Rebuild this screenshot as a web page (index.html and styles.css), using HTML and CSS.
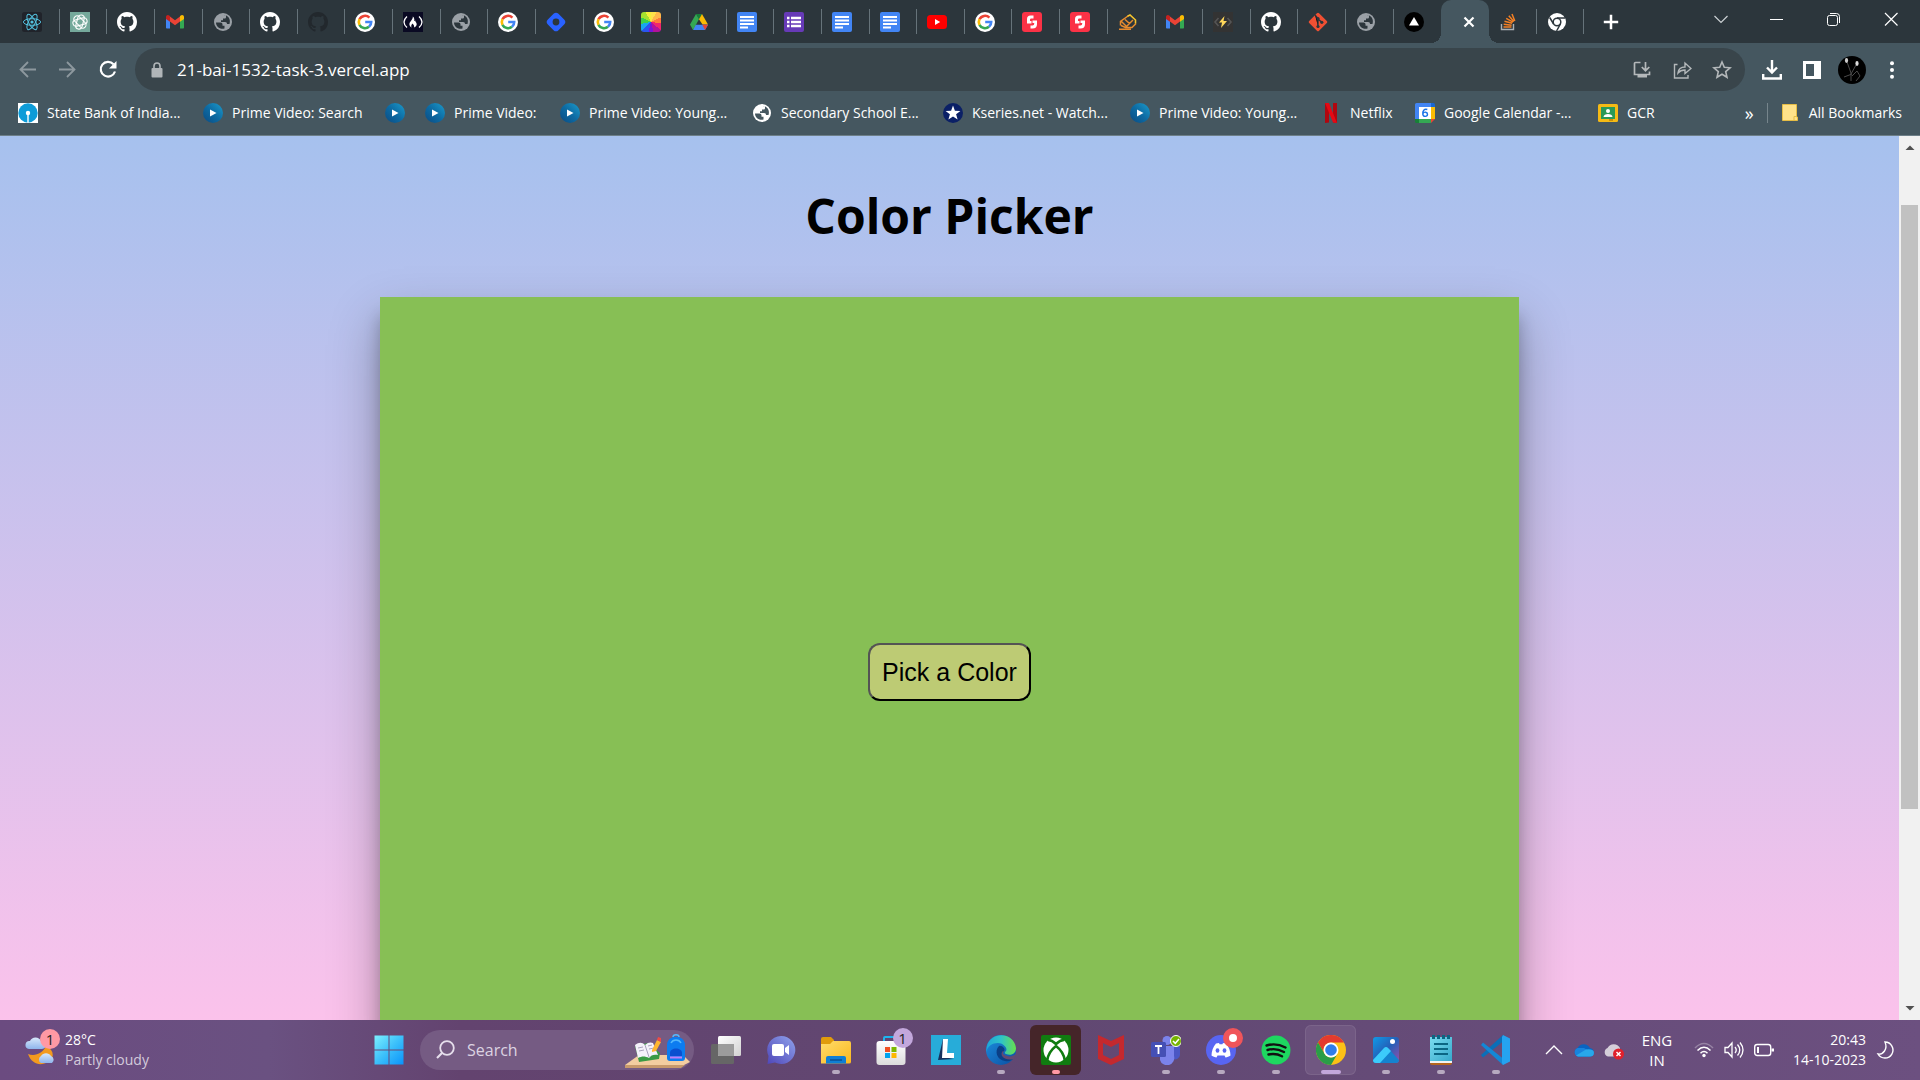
FILE: index.html
```html
<!DOCTYPE html>
<html lang="en">
<head>
<meta charset="utf-8">
<title>Color Picker</title>
<link rel="stylesheet" href="styles.css">
</head>
<body>
<svg class="defs" aria-hidden="true">
  <defs>
    <linearGradient id="g-prime" x1="1" y1="0" x2="0" y2="1"><stop offset="0" stop-color="#1c9ccc"/><stop offset=".5" stop-color="#0d6ba3"/><stop offset="1" stop-color="#0a4a82"/></linearGradient>
    <linearGradient id="g-win" x1="0" y1="0" x2="1" y2="1"><stop offset="0" stop-color="#7df0ff"/><stop offset=".5" stop-color="#3cc0fa"/><stop offset="1" stop-color="#0a93fb"/></linearGradient>
    <linearGradient id="g-chat" x1="1" y1="0" x2="0" y2="1"><stop offset="0" stop-color="#8fa2ec"/><stop offset="1" stop-color="#4f46b8"/></linearGradient>
    <linearGradient id="g-folder" x1="0" y1="0" x2="1" y2="1"><stop offset="0" stop-color="#ffdc6b"/><stop offset="1" stop-color="#fab81e"/></linearGradient>
    <linearGradient id="g-store" x1="0" y1="0" x2="0" y2="1"><stop offset="0" stop-color="#fff"/><stop offset="1" stop-color="#dcdcdc"/></linearGradient>
    <linearGradient id="g-edge1" x1="0" y1="0" x2="1" y2="0"><stop offset="0" stop-color="#1fa5d8"/><stop offset=".5" stop-color="#2fc3c8"/><stop offset="1" stop-color="#68e04c"/></linearGradient>
    <linearGradient id="g-edge2" x1="0" y1="0" x2="1" y2="1"><stop offset="0" stop-color="#1c8fe0"/><stop offset="1" stop-color="#0c4ea0"/></linearGradient>
    <linearGradient id="g-photo" x1="0" y1="0" x2="1" y2="1"><stop offset="0" stop-color="#0f9be8"/><stop offset=".5" stop-color="#2460b8"/><stop offset="1" stop-color="#9a4ea8"/></linearGradient>
    <linearGradient id="g-pad" x1="0" y1="0" x2="1" y2="1"><stop offset="0" stop-color="#7bdcf0"/><stop offset="1" stop-color="#36a9cb"/></linearGradient>
    <linearGradient id="g-cloud" x1="0" y1="0" x2="0" y2="1"><stop offset="0" stop-color="#d8e9fb"/><stop offset="1" stop-color="#8fb5ec"/></linearGradient>
    <linearGradient id="g-task" x1="0" y1="0" x2="1" y2="1"><stop offset="0" stop-color="#fff"/><stop offset="1" stop-color="#d2d2d2"/></linearGradient>
    <symbol id="react" viewBox="0 0 20 20"><rect width="20" height="20" rx="2.500" fill="#20232a"/><g fill="none" stroke="#53c1de" stroke-width="1"><ellipse cx="10" cy="10" rx="8.600" ry="3.300"/><ellipse cx="10" cy="10" rx="8.600" ry="3.300" transform="rotate(60 10 10)"/><ellipse cx="10" cy="10" rx="8.600" ry="3.300" transform="rotate(120 10 10)"/></g><circle cx="10" cy="10" r="1.600" fill="#53c1de"/></symbol>
    <symbol id="openai" viewBox="0 0 20 20"><rect width="20" height="20" fill="#75a99b"/><g fill="none" stroke="#fff" stroke-width="1.100"><rect x="6.800" y="2.800" width="6.400" height="14.400" rx="3.200" transform="rotate(15 10 10)"/><rect x="6.800" y="2.800" width="6.400" height="14.400" rx="3.200" transform="rotate(75 10 10)"/><rect x="6.800" y="2.800" width="6.400" height="14.400" rx="3.200" transform="rotate(135 10 10)"/></g></symbol>
    <symbol id="github" viewBox="0 0 16 16"><path fill="currentColor" d="M8 0C3.580 0 0 3.580 0 8c0 3.540 2.290 6.530 5.470 7.590.4.070.55-.17.55-.38 0-.19-.01-.82-.01-1.490-2.010.37-2.530-.49-2.690-.94-.09-.23-.48-.94-.82-1.130-.28-.15-.68-.52-.01-.53.63-.01 1.080.58 1.230.82.72 1.210 1.870.87 2.330.66.07-.52.28-.87.51-1.070-1.780-.2-3.640-.89-3.640-3.950 0-.87.31-1.590.82-2.150-.08-.2-.36-1.020.08-2.120 0 0 .67-.21 2.200.82.64-.18 1.320-.27 2-.27s1.360.09 2 .27c1.530-1.040 2.200-.82 2.200-.82.44 1.100.16 1.920.08 2.120.51.56.82 1.270.82 2.150 0 3.070-1.870 3.750-3.650 3.950.29.25.54.73.54 1.480 0 1.070-.01 1.930-.01 2.200 0 .21.15.46.55.38A8.010 8.010 0 0 0 16 8c0-4.420-3.580-8-8-8z"/></symbol>
    <symbol id="gmail" viewBox="0 0 20 20"><path fill="#4285f4" d="M1 5v10.500c0 .6.500 1 1 1h3V8z"/><path fill="#34a853" d="M19 5v10.500c0 .6-.5 1-1 1h-3V8z"/><path fill="#ea4335" d="M5 4.500l5 3.800 5-3.800v5L10 13.300 5 9.500z"/><path fill="#c5221f" d="M1 7V5c0-2 2-2.700 3.300-1.500L5 4.200v5.500z"/><path fill="#fbbc04" d="M19 7V5c0-2-2-2.700-3.300-1.500l-.7.700v5.500z"/></symbol>
    <symbol id="globe" viewBox="0 0 20 20"><circle cx="10" cy="10" r="9" fill="currentColor"/><path d="M3 10.500h4.500c1.300 0 2 .8 2 2v1.300h2v2.700c-4.500 1.300-8.500-2-8.500-6zM9 3.300c1.500-.4 3-.2 4 .2v1.800c0 .8-.6 1.200-1.500 1.200H10v1.800H8V10h4c1.500 0 2 .8 2 2h2.500c.8-2.500.4-5-1-6.700C13.500 2.900 11 2.600 9 3.300z" fill="var(--land,#2c363c)"/></symbol>
    <symbol id="google" viewBox="0 0 20 20"><circle cx="10" cy="10" r="10" fill="#fff"/><g fill="none" stroke-width="2.600"><path stroke="#ea4335" d="M4.500 7.300A6.200 6.200 0 0 1 14.400 5.600"/><path stroke="#fbbc05" d="M4.500 12.800a6.200 6.200 0 0 1 0-5.600"/><path stroke="#34a853" d="M14 14.800a6.200 6.200 0 0 1-9.500-2"/><path stroke="#4285f4" d="M10.200 10h6a6.200 6.200 0 0 1-2.200 4.800"/></g></symbol>
    <symbol id="fcc" viewBox="0 0 20 20"><rect width="20" height="20" fill="#0a0a23"/><path d="M4 4.500c-4 3.500-4 7.500 0 11M16 4.500c4 3.500 4 7.500 0 11" fill="none" stroke="#fff" stroke-width="1.300"/><path d="M9.800 4.500c.5 3-3.400 5-3.400 7.800 0 1.600 1 2.800 2.300 3.200-1-1.500-.2-3 1-4 .3 1 2.200 2 1.200 4 1.600-.4 2.800-1.600 2.800-3.200 0-2-1.500-2.400-1.600-4.100-.2.700-.5.900-.9.900.5-1.800-.1-3.800-1.400-4.600z" fill="#fff"/></symbol>
    <symbol id="hash" viewBox="0 0 20 20"><rect x="2.500" y="2.500" width="15" height="15" rx="3.500" transform="rotate(45 10 10)" fill="#2962ff"/><circle cx="10" cy="10" r="3.400" fill="#2c363c"/></symbol>
    <symbol id="drive" viewBox="0 0 20 20"><path fill="#188038" d="M7 2h6l-3 5.300z"/><path fill="#fbbc04" d="M10 7.300L13 2l6 10.500h-5.500z"/><path fill="#4285f4" d="M6 12.700h13L16 18H4z"/><path fill="#ea4335" d="M13.300 12.700H19L16 18z"/><path fill="#34a853" d="M7 2l3 5.300L4 18l-3-5.500z"/></symbol>
    <symbol id="docs" viewBox="0 0 20 20"><rect width="20" height="20" rx="2" fill="#4285f4"/><path stroke="#fff" stroke-width="2" d="M3 5h14M3 8.500h14M3 12h14M3 15.500h8"/></symbol>
    <symbol id="forms" viewBox="0 0 20 20"><rect width="20" height="20" rx="2" fill="#673ab7"/><path stroke="#fff" stroke-width="2.500" d="M3 6h2.500M7 6h10M3 10h2.500M7 10h10M3 14h2.500M7 14h10"/></symbol>
    <symbol id="youtube" viewBox="0 0 20 20"><rect y="3" width="20" height="14" rx="3.500" fill="red"/><path fill="#fff" d="M8 7l5.200 3L8 13z"/></symbol>
    <symbol id="shot" viewBox="0 0 20 20"><rect width="20" height="20" rx="3" fill="#fb3246"/><path fill="#fff" d="M11.500 3.500v3H9.200Q8 6.500 8 7.700V9h1.500v2.500H5V7q0-3.500 3.500-3.500zM15 8.500V12q0 4.500-4.500 4.500h-2v-3h2q1.700 0 1.700-1.700V11h-1.700V8.500z"/></symbol>
    <symbol id="pencil" viewBox="0 0 20 20"><path d="M2.500 13.500v-4L10 4M3 13.500l4.500 2h6.500L18 11.500M3.500 9.500l5 5L15 8M7 7.500l4.500 4M1 17.200h12" fill="none" stroke="#e78b2e" stroke-width="1.500"/><path d="M9.500 4.200L12 3l5.500 5v3.500" fill="none" stroke="#f7c52d" stroke-width="1.600"/></symbol>
    <symbol id="bolt" viewBox="0 0 20 20"><rect width="20" height="20" fill="#333"/><path d="M5.500 6L2 10l3.500 4M14.500 6l3.500 4-3.500 4" fill="none" stroke="#555" stroke-width="1.600"/><path d="M11.500 4L6 10.500h3L8 16l6-7h-3.500z" fill="#ffd75a"/></symbol>
    <symbol id="git" viewBox="0 0 20 20"><rect x="3" y="3" width="14" height="14" rx="1.500" transform="rotate(45 10 10)" fill="#f05033"/><path d="M7 3l3 3.500v8M10 7l3.500 3" stroke="#2c363c" stroke-width="1.400"/><g fill="#2c363c"><circle cx="10" cy="6.600" r="1.600"/><circle cx="10" cy="14.500" r="1.600"/><circle cx="13.800" cy="10.300" r="1.600"/></g></symbol>
    <symbol id="vercel" viewBox="0 0 20 20"><circle cx="10" cy="10" r="10"/><path fill="#fff" d="M10 5l5 8.500H5z"/></symbol>
    <symbol id="stack" viewBox="0 0 20 20"><path d="M2.500 12v5.500h12V12" fill="none" stroke="#aab0b4" stroke-width="1.400"/><path d="M4.500 15h8M4.700 12.300l7.900.9M5.500 9.300l7.600 2M7.200 6.300l6.800 3.800M9.800 3.700l5.100 5.800M13 2l2.800 7" stroke="#f48024" stroke-width="1.500"/></symbol>
    <symbol id="chromew" viewBox="0 0 20 20"><circle cx="10" cy="10" r="9" fill="#fff"/><circle cx="10" cy="10" r="3.800" fill="none" stroke="#2c363c" stroke-width="1.500"/><path d="M10 6h8M6.600 12L2.700 5.500M13.400 12L9.600 19" stroke="#2c363c" stroke-width="1.500"/></symbol>
    <symbol id="prime" viewBox="0 0 20 20"><circle cx="10" cy="10" r="10" fill="url(#g-prime)"/><path fill="#fff" d="M7 6.500l6.500 3.500L7 13.500z"/></symbol>
    <symbol id="sbi" viewBox="0 0 20 20"><rect width="20" height="20" fill="#fff"/><circle cx="10" cy="10" r="9.700" fill="#0d9cd8"/><circle cx="10" cy="10" r="2.200" fill="#fff"/><path stroke="#fff" stroke-width="1.400" d="M10 10v10"/></symbol>
    <symbol id="star" viewBox="0 0 20 20"><circle cx="10" cy="10" r="10" fill="#0b2066"/><path fill="#fff" d="M10 2.500l1.900 5.200 5.500.2-4.300 3.400 1.500 5.300-4.600-3-4.600 3 1.500-5.300-4.300-3.400 5.500-.2z"/></symbol>
    <symbol id="netflix" viewBox="0 0 20 20"><path fill="#b1060f" d="M4 0h4v19.500l-4 .5zM12 0h4v20l-4-.5z"/><path fill="#e50914" d="M4 0h4l8 20-4-.5z"/></symbol>
    <symbol id="cal" viewBox="0 0 20 20"><path fill="#4285f4" d="M0 1.500Q0 0 1.500 0H16v4H4v12H0z"/><path fill="#1967d2" d="M16 0h2.500Q20 0 20 1.500V4h-4z"/><path fill="#fbbc04" d="M16 4h4v12h-4z"/><path fill="#34a853" d="M4 16h12v4H4z"/><path fill="#188038" d="M0 16h4v4H1.500Q0 20 0 18.500z"/><path fill="#ea4335" d="M16 16h4l-4 4z"/><path fill="#fff" d="M4 4h12v12H4z"/><path d="M12.300 6.500c-3-1-5 1.300-4.500 4.600.4 3.200 4.700 2.800 4.700.2 0-2.500-3.600-2.900-4.600-.6" fill="none" stroke="#1a73e8" stroke-width="1.400"/></symbol>
    <symbol id="gcr" viewBox="0 0 20 20"><rect y="1" width="20" height="18" rx="1.500" fill="#f5ba15"/><rect x="3" y="4" width="14" height="12" fill="#2a9a57"/><circle cx="10" cy="8" r="2" fill="#fff"/><path fill="#fff" d="M5.500 14c0-4 9-4 9 0z"/><path fill="#c98f0a" d="M11 16h4v2h-4z"/></symbol>
    <symbol id="folder" viewBox="0 0 20 20"><path fill="#ffe28a" stroke="#e6bd45" d="M2.500 1.500h14V14h1v3.500h-15z"/><path d="M14 17.500v-4h3" fill="none" stroke="#e6bd45"/></symbol>
  </defs>
</svg>

<header class="browser">
  <div class="strip">
    <nav class="tabs" aria-label="Tabs">
      <a class="tab" href="#"><svg><use href="#react"/></svg></a>
      <a class="tab" href="#"><svg><use href="#openai"/></svg></a>
      <a class="tab" href="#"><svg><use href="#github"/></svg></a>
      <a class="tab" href="#"><svg><use href="#gmail"/></svg></a>
      <a class="tab dim" href="#"><svg><use href="#globe"/></svg></a>
      <a class="tab" href="#"><svg><use href="#github"/></svg></a>
      <a class="tab dark" href="#"><svg><use href="#github"/></svg></a>
      <a class="tab" href="#"><svg><use href="#google"/></svg></a>
      <a class="tab" href="#"><svg><use href="#fcc"/></svg></a>
      <a class="tab dim" href="#"><svg><use href="#globe"/></svg></a>
      <a class="tab" href="#"><svg><use href="#google"/></svg></a>
      <a class="tab" href="#"><svg><use href="#hash"/></svg></a>
      <a class="tab" href="#"><svg><use href="#google"/></svg></a>
      <a class="tab" href="#"><i class="wheel"></i></a>
      <a class="tab" href="#"><svg><use href="#drive"/></svg></a>
      <a class="tab" href="#"><svg><use href="#docs"/></svg></a>
      <a class="tab" href="#"><svg><use href="#forms"/></svg></a>
      <a class="tab" href="#"><svg><use href="#docs"/></svg></a>
      <a class="tab" href="#"><svg><use href="#docs"/></svg></a>
      <a class="tab" href="#"><svg><use href="#youtube"/></svg></a>
      <a class="tab" href="#"><svg><use href="#google"/></svg></a>
      <a class="tab" href="#"><svg><use href="#shot"/></svg></a>
      <a class="tab" href="#"><svg><use href="#shot"/></svg></a>
      <a class="tab" href="#"><svg><use href="#pencil"/></svg></a>
      <a class="tab" href="#"><svg><use href="#gmail"/></svg></a>
      <a class="tab" href="#"><svg><use href="#bolt"/></svg></a>
      <a class="tab" href="#"><svg><use href="#github"/></svg></a>
      <a class="tab" href="#"><svg><use href="#git"/></svg></a>
      <a class="tab dim" href="#"><svg><use href="#globe"/></svg></a>
      <a class="tab last" href="#"><svg><use href="#vercel"/></svg></a>
      <div class="tab active"><button class="close" aria-label="Close tab"><svg viewBox="0 0 20 20"><path d="M5.500 5.500l9 9M14.500 5.500l-9 9" stroke="#fff" stroke-width="2.200"/></svg></button></div>
      <a class="tab" href="#"><svg><use href="#stack"/></svg></a>
      <a class="tab" href="#"><svg><use href="#chromew"/></svg></a>
    </nav>
    <button class="newtab" aria-label="New tab"><svg viewBox="0 0 20 20"><path d="M10 2v16M2 10h16" stroke="#fff" stroke-width="2.800"/></svg></button>
    <div class="window">
      <button aria-label="Search tabs"><svg viewBox="0 0 20 20"><path d="M3.500 7l6.500 6.500L16.500 7" fill="none" stroke="#ccd1d4" stroke-width="1.200"/></svg></button>
      <button aria-label="Minimize"><svg viewBox="0 0 20 20"><path d="M2 10.500h13" stroke="#fff"/></svg></button>
      <button aria-label="Restore"><svg viewBox="0 0 20 20"><rect x="2.500" y="6.500" width="10" height="10" rx="2" fill="none" stroke="#fff"/><path d="M5 4.500h6.500a3 3 0 0 1 3 3V14" fill="none" stroke="#fff"/></svg></button>
      <button aria-label="Close"><svg viewBox="0 0 20 20"><path d="M3 4l12.500 12.500M15.500 4L3 16.500" stroke="#fff" stroke-width="1.200"/></svg></button>
    </div>
  </div>

  <div class="toolbar">
    <button class="tool faded" aria-label="Back"><svg viewBox="0 0 20 20"><path d="M18 9.500H3M10 2L2.500 9.500 10 17" fill="none" stroke="currentColor" stroke-width="1.800"/></svg></button>
    <button class="tool faded" aria-label="Forward"><svg viewBox="0 0 20 20"><path d="M1 9.500h15M9 2l7.500 7.500L9 17" fill="none" stroke="currentColor" stroke-width="1.800"/></svg></button>
    <button class="tool" aria-label="Reload"><svg viewBox="0 0 20 20"><path d="M15.500 4.300A7.300 7.300 0 1 0 17 11.500" fill="none" stroke="currentColor" stroke-width="2.200"/><path d="M18.500 1v7.500H11z" fill="currentColor"/></svg></button>
    <div class="omnibox">
      <svg class="lock" viewBox="0 0 20 20"><rect x="4.500" y="8" width="11" height="9.500" rx="1" fill="currentColor"/><path d="M7 8V6a3 3 0 0 1 6 0v2" fill="none" stroke="currentColor" stroke-width="1.600"/></svg>
      <input type="text" aria-label="Address" value="21-bai-1532-task-3.vercel.app">
      <button class="tool grey" aria-label="Install"><svg viewBox="0 0 20 20"><path d="M8.500 2.500h-5a1 1 0 0 0-1 1v11h15v-3M13.500 2v8M9.800 7l3.700 3.700L17.300 7" fill="none" stroke="currentColor" stroke-width="1.700"/><path d="M5.500 14h9.500v3.500H5.500z" fill="currentColor"/></svg></button>
      <button class="tool grey" aria-label="Share"><svg viewBox="0 0 20 20"><path d="M5.500 4.500h-3v13.500h13.500V15M6 13c.5-4.500 3-6 7-6V3l6 5.500-6 5v-3.500c-3 0-5 .6-7 3z" fill="none" stroke="currentColor" stroke-width="1.400"/></svg></button>
      <button class="tool grey" aria-label="Bookmark"><svg viewBox="0 0 20 20"><path d="M10 2l2.300 5.300 5.800.5-4.400 3.800 1.300 5.700-5-3-5 3 1.300-5.700-4.400-3.800 5.800-.5z" fill="none" stroke="currentColor" stroke-width="1.600"/></svg></button>
    </div>
    <button class="tool" aria-label="Downloads"><svg viewBox="0 0 20 20"><path d="M10 0v12M5 7.500l5 5 5-5M1.200 14v4.500h17.600V14" fill="none" stroke="#fff" stroke-width="2.400"/></svg></button>
    <button class="tool" aria-label="Side panel"><svg viewBox="0 0 20 20"><path d="M1 1h18v18H1zM4 4v12h8V4z" fill="#fff" fill-rule="evenodd"/></svg></button>
    <button class="tool avatar" aria-label="Profile"><svg viewBox="0 0 28 28"><circle cx="14" cy="14" r="14"/><path d="M9 6l4 11M18 9l-5 9M13 17v8M14 20l5-5 3 5-4 5M6 21l8-3" fill="none" stroke="#4a4a4a"/><ellipse cx="8.500" cy="4.500" rx="1.600" ry="2.400" fill="#ccc"/><ellipse cx="19" cy="7.500" rx="1.600" ry="2.400" fill="#ddd"/></svg></button>
    <button class="tool" aria-label="Menu"><svg viewBox="0 0 20 20"><g fill="#fff"><circle cx="10" cy="3.300" r="2"/><circle cx="10" cy="10" r="2"/><circle cx="10" cy="16.700" r="2"/></g></svg></button>
  </div>

  <div class="bookmarks">
    <nav class="marks" aria-label="Bookmarks">
      <a href="#"><svg><use href="#sbi"/></svg>State Bank of India...</a>
      <a href="#"><svg><use href="#prime"/></svg>Prime Video: Search</a>
      <a href="#" aria-label="Prime Video"><svg><use href="#prime"/></svg></a>
      <a href="#"><svg><use href="#prime"/></svg>Prime Video:</a>
      <a href="#"><svg><use href="#prime"/></svg>Prime Video: Young...</a>
      <a href="#" class="light"><svg><use href="#globe"/></svg>Secondary School E...</a>
      <a href="#"><svg><use href="#star"/></svg>Kseries.net - Watch...</a>
      <a href="#"><svg><use href="#prime"/></svg>Prime Video: Young...</a>
      <a href="#"><svg><use href="#netflix"/></svg>Netflix</a>
      <a href="#"><svg><use href="#cal"/></svg>Google Calendar -...</a>
      <a href="#"><svg><use href="#gcr"/></svg>GCR</a>
    </nav>
    <button class="more" aria-label="More bookmarks">»</button>
    <a class="all" href="#"><svg><use href="#folder"/></svg>All Bookmarks</a>
  </div>
</header>

<div class="viewport">
  <main class="page">
    <h1>Color Picker</h1>
    <section class="card"><button class="pick">Pick a Color</button></section>
  </main>
  <div class="scrollbar">
    <svg viewBox="0 0 20 20"><path d="M5.500 14L10 9.500l4.500 4.500z" fill="#505050"/></svg>
    <div class="track"><div class="thumb"></div></div>
    <svg viewBox="0 0 20 20"><path d="M5.500 6L10 10.500 14.500 6z" fill="#505050"/></svg>
  </div>
</div>

<footer class="taskbar">
  <a class="weather" href="#">
    <span class="badged"><svg class="sky" viewBox="0 0 32 32"><path d="M4 20c7 3 15-1 18-8 9 4 9 14 0 17-7 3-15 0-18-9z" fill="#f39a1e"/><path d="M5 15a4 4 0 0 1 1-8 6 6 0 0 1 11 0 4 4 0 0 1 1 8z" fill="url(#g-cloud)"/><path d="M17 29a4 4 0 0 1 0-7 6 6 0 0 1 10 0 4 4 0 0 1 1 7z" fill="url(#g-cloud)"/></svg><b class="badge pink">1</b></span>
    <span class="lines"><span>28°C</span><span class="soft">Partly cloudy</span></span>
  </a>
  <nav class="apps" aria-label="Taskbar">
    <button class="app" aria-label="Start"><svg viewBox="0 0 30 30"><path d="M.5.500h14v14H.5zM15.500.500h14v14h-14zM.5 15.500h14v14H.5zM15.500 15.500h14v14h-14z" fill="url(#g-win)"/></svg></button>
    <label class="search">
      <svg class="glass" viewBox="0 0 20 20"><circle cx="12" cy="8" r="6.800" fill="none" stroke="#e6dfec" stroke-width="1.800"/><path d="M7.500 12.500L2 18" stroke="#e6dfec" stroke-width="2.200"/></svg>
      <input type="text" placeholder="Search" aria-label="Search">
      <svg class="art" viewBox="0 0 66 40"><path d="M0 35L14 25h44l7 7-8 4z" fill="#f3cda0"/><path d="M0 35h60l-4 3H0z" fill="#c89a6c"/><path d="M10 16l13-3 12 10-1 6-20 3z" fill="#3a9a44"/><path d="M10 15c4-3 7-3 10 0 3-3 6-3 8-2l5 12c-4-1-7 0-9 3-4-2-7-2-11 0z" fill="#f4f1fa"/><path d="M20 15l4 12M13 18l5-1M14 21l5-1M23 16l4-1M24 19l5-1" stroke="#a9a3bd"/><path d="M27 20l5-10 4 2-5 9-4 1z" fill="#ffb62e"/><path d="M32 10l1-3 3 1v4z" fill="#f04c44"/><path d="M42 28V15c0-11 18-11 18 0v13q0 3-3 3H45q-3 0-3-3z" fill="#0c7cf0"/><path d="M45 23c0-6 12-6 12 0v3H45z" fill="#0a4fd0"/><path d="M45 27.500h12" stroke="#c07df8" stroke-width="2"/><path d="M48 7c0-3 6-3 6 0M46 13c2-4 8-4 10 0" fill="none" stroke="#55b8fb" stroke-width="1.500"/></svg>
    </label>
    <button class="app" aria-label="Task view"><svg viewBox="0 0 30 30"><rect y="9" width="23" height="20" rx="1.500" fill="#666"/><rect x="7" y="1" width="23" height="20" rx="1.500" fill="url(#g-task)"/><path d="M7 9h16v12H8.500Q7 21 7 19.500z" fill="#9c9c9c"/></svg></button>
    <button class="app" aria-label="Chat"><svg viewBox="0 0 30 30"><path d="M15 1a14 14 0 1 1-6 26.500L1.500 29l1-8A14 14 0 0 1 15 1z" fill="url(#g-chat)"/><rect x="6" y="9" width="12" height="12" rx="2" fill="#fff"/><path d="M19 13l4-3v10l-4-3z" fill="#fff"/></svg></button>
    <button class="app run" aria-label="Explorer"><svg viewBox="0 0 30 30"><path d="M0 4q0-2 2-2h8l3 3v4H0z" fill="#e09b0b"/><path d="M0 9h9l3-3h16q2 0 2 2v19q0 1.500-2 1.500H0z" fill="url(#g-folder)"/><path d="M5 28.500V23q0-2 2-2h16q2 0 2 2v5.500z" fill="#0f7fd4"/><path d="M9 25h12" stroke="#0a4f94" stroke-width="1.500"/></svg></button>
    <button class="app" aria-label="Store"><span class="badged"><svg viewBox="0 0 30 30"><path d="M8 8V3q0-1 1-1h11q1 0 1 1v5" fill="none" stroke="#1fb4ee" stroke-width="2"/><rect x=".5" y="6" width="29" height="24" rx="3" fill="url(#g-store)"/><path fill="#f05023" d="M9 12h5v5H9z"/><path fill="#7db900" d="M15.500 12h5v5h-5z"/><path fill="#00a3ee" d="M9 18h5v5H9z"/><path fill="#fdb800" d="M15.500 18h5v5h-5z"/></svg><b class="badge lilac">1</b></span></button>
    <button class="app" aria-label="Lenovo Vantage"><svg viewBox="0 0 30 30"><path fill="#27acd9" d="M0 0h30v30H0z"/><path fill="#16305c" d="M12 4L7 25l16-1-11-2z"/><path fill="#fff" d="M12 4h5l-1 14h7v5H11z"/></svg></button>
    <button class="app run" aria-label="Edge"><svg viewBox="0 0 30 30"><circle cx="15" cy="15" r="15" fill="url(#g-edge2)"/><path d="M1 11C5-4 28-3 30 13c0 6-5 8-10 6-2-1-1-2 0-3 2-3-3-8-8-8C6 8 2 11 0 17z" fill="url(#g-edge1)"/><path d="M13 11c-5 5-2 14 6 15 4 1 7-1 9-3-4 1-8 1-10-2-2-2-1-4 0-5 2-2-2-6-5-5z" fill="#0b3f86"/><path d="M18 16c-2 2-1 4 3 5 3 1 6 0 9-2l-2 5c-4 1-9 1-12-3-1-3 0-5 2-5z" fill="#634972"/></svg></button>
    <button class="app run xbox" aria-label="Xbox"><svg viewBox="0 0 30 30"><rect width="30" height="30" rx="2" fill="#107c10"/><circle cx="15" cy="15" r="12.500" fill="#fff"/><path d="M6 26c1-7 5-12 9-15 4 3 8 8 9 15M7 5c3 0 6 2 8 4 2-2 5-4 8-4" fill="none" stroke="#107c10" stroke-width="2.600"/></svg></button>
    <button class="app" aria-label="McAfee"><svg viewBox="0 0 30 30"><path d="M2 0l13 6L28 0v24l-13 6-13-6zM7 8v12l8 4 8-4V8l-8 4z" fill="#c4292e" fill-rule="evenodd"/></svg></button>
    <button class="app run" aria-label="Teams"><svg viewBox="0 0 30 30"><circle cx="16" cy="5.500" r="4.500" fill="#7b83eb"/><path d="M22 11h7v9a5 5 0 0 1-7 4z" fill="#4b57c4"/><path d="M9 11h14v10a7 7 0 0 1-14 4z" fill="#7b83eb"/><rect y="7" width="15" height="15" rx="1.500" fill="#4550b5"/><path d="M4 11h7M7.500 11v8" stroke="#fff" stroke-width="1.800"/><circle cx="25" cy="6" r="5.500" fill="#77b300" stroke="#fff"/><path d="M22 6l2.300 2.300L28 4" fill="none" stroke="#fff" stroke-width="1.500"/></svg></button>
    <button class="app run" aria-label="Discord"><span class="badged"><svg viewBox="0 0 30 30"><circle cx="15" cy="15" r="15" fill="#5865f2"/><path d="M10 8.500L13 8l.6 1.200h2.800L17 8l3 .5c3 3.500 4.500 8 4.500 12-1.500 1-3.500 1.800-5 2l-1-2h-7l-1 2c-1.500-.2-3.500-1-5-2 0-4 1.500-8.500 4.500-12z" fill="#fff"/><ellipse cx="11.500" cy="15.500" rx="1.900" ry="2.200" fill="#5865f2"/><ellipse cx="18.500" cy="15.500" rx="1.900" ry="2.200" fill="#5865f2"/></svg><b class="badge live"></b></span></button>
    <button class="app run" aria-label="Spotify"><svg viewBox="0 0 30 30"><circle cx="15" cy="15" r="14.500" fill="#1ed760"/><path d="M5.500 10.500c6-1.800 13-1.200 19 2M6.500 15c5-1.500 11-1 16.500 2M7.500 19.500c4.500-1 9-.7 13.500 1.800" fill="none" stroke="#111" stroke-width="2.400" stroke-linecap="round"/></svg></button>
    <button class="app run current" aria-label="Chrome"><svg viewBox="0 0 30 30"><circle cx="15" cy="15" r="15" fill="#fbc116"/><path d="M2 7.500A15 15 0 0 1 28 7.500H15a7.500 7.500 0 0 0-6.500 11.300z" fill="#e33b2e"/><path d="M2 7.500l6.500 11.300a7.500 7.500 0 0 0 13 0L15 30A15 15 0 0 1 2 7.500z" fill="#2a9d48"/><circle cx="15" cy="15" r="7.500" fill="#fff"/><circle cx="15" cy="15" r="5.800" fill="#2f7de9"/></svg></button>
    <button class="app run" aria-label="Photos"><svg viewBox="0 0 30 30"><rect x="2" y="2" width="26" height="26" rx="3" fill="url(#g-photo)"/><path d="M2 25l11-12q2-2 4 0l11 12q0 3-3 3H5q-3 0-3-3z" fill="#1483cf"/><path d="M2 25l11-12q2-2 4 0l3 3L9 28H5q-3 0-3-3z" fill="#3ccbfb"/><circle cx="21.500" cy="6.500" r="2.500" fill="#fff"/></svg></button>
    <button class="app run" aria-label="Notepad"><svg viewBox="0 0 30 30"><path d="M4 26h22v2q0 2-2 2H6q-2 0-2-2z" fill="#b5651d"/><path d="M4 2h22v24H4z" fill="url(#g-pad)"/><path d="M4 26h22v2H4z" fill="#f2f2f2"/><path d="M8 9h14M8 14h14M8 19h14" stroke="#0b6683" stroke-width="2"/><path d="M7.500 0v4M12.500 0v4M17.500 0v4M22.500 0v4" stroke="#0b6683" stroke-width="3"/></svg></button>
    <button class="app run" aria-label="VS Code"><svg viewBox="0 0 30 30"><path d="M0 20l2 2.500 20-16V0z" fill="#0a6fb8"/><path d="M0 10l2-2.500L22 23.500V30z" fill="#1388d6"/><path d="M22 0l7 3.500v23L22 30l-1-2V2z" fill="#25a3f0"/></svg></button>
  </nav>
  <div class="tray">
    <svg viewBox="0 0 20 20"><path d="M2 14l8-8 8 8" fill="none" stroke="#fff" stroke-width="1.400"/></svg>
    <svg viewBox="0 0 20 20"><path d="M4 16.500a4.500 4.500 0 0 1-.5-8.500 7 7 0 0 1 12.500 0 4.300 4.300 0 0 1 0 8.500z" fill="#0a63c0"/><path d="M4 16.500a4.500 4.500 0 0 1-.5-8.500l6.500 0 10 6q-1 2.500-4 2.500z" fill="#1883dc"/><path d="M2 15.500L12 9.500q8-1 8 3.500-.5 3.500-4 3.500H4z" fill="#28a8ea"/></svg>
    <svg viewBox="0 0 20 20"><path d="M4 16.500a4.500 4.500 0 0 1-.5-8.500 7 7 0 0 1 12.500 0v8.500z" fill="#d5ced9"/><circle cx="14.500" cy="14" r="5.500" fill="#e0202c"/><path d="M12.500 12l4 4M16.500 12l-4 4" stroke="#fff" stroke-width="1.500"/></svg>
    <button class="lang"><span>ENG</span><span>IN</span></button>
    <svg viewBox="0 0 20 20"><g fill="none" stroke="#fff" stroke-width="1.600"><path opacity=".3" d="M1 8q9-9 18 0"/><path d="M3.500 10.500q6.500-6.500 13 0M6.500 13.200q3.500-3.400 7 0"/></g><circle cx="10" cy="15.500" r="1.700" fill="#fff"/></svg>
    <svg viewBox="0 0 20 20"><path d="M1 7.500h3l4-4.500v14l-4-4.500H1zM11 7q2.500 3 0 6M13.500 4.500q4.500 5.500 0 11M16 2.500q6 7.500 0 15" fill="none" stroke="#fff" stroke-width="1.300"/></svg>
    <svg viewBox="0 0 20 20"><rect x=".7" y="4.500" width="16" height="11" rx="2.500" fill="none" stroke="#fff" stroke-width="1.400"/><path d="M3 7h2v6H3zM17.500 8.500H20v3h-2.500z" fill="#fff"/></svg>
    <button class="clock"><span>20:43</span><span>14-10-2023</span></button>
    <svg viewBox="0 0 20 20"><path d="M9 2a8 8 0 1 1-7 12c5 1 10-5 7-12z" fill="none" stroke="#fff" stroke-width="1.400"/></svg>
  </div>
</footer>
</body>
</html>
```
FILE: styles.css
```css
* { box-sizing: border-box; }

body {
  margin: 0;
  height: 100vh;
  display: flex;
  flex-direction: column;
  overflow: hidden;
  font: 14px/20px "Open Sans", "Noto Sans", sans-serif;
  color: #fff;
}

a { color: inherit; text-decoration: none; }
button {
  padding: 0;
  border: 0;
  background: none;
  color: inherit;
  font: inherit;
  display: flex;
  align-items: center;
  justify-content: center;
}
input { border: 0; outline: 0; padding: 0; background: none; color: inherit; min-width: 0; }
svg { width: 20px; height: 20px; flex: none; display: block; }
.defs { position: absolute; width: 0; height: 0; }

/* Browser chrome */
.browser { background: #455760; border-bottom: 1px solid #6d7f88; }
.strip { display: flex; height: 43px; padding-left: 12px; background: #2c363c; }
.tabs { flex: 1; display: flex; min-width: 0; }
.tab {
  flex: 1 1 0;
  min-width: 0;
  display: flex;
  align-items: center;
  padding-left: 10px;
  background: linear-gradient(#66737a, #66737a) right center / 1px 25px no-repeat;
}
.tab.last { background: none; }
.tab.dim { color: #9aa0a6; }
.tab.dark { color: #22282d; }
.tab.active {
  position: relative;
  background: #455760;
  border-radius: 10px 10px 0 0;
}
.close { margin-left: 8px; }
.tab.active::before,
.tab.active::after {
  content: "";
  position: absolute;
  bottom: 0;
  width: 10px;
  height: 10px;
}
.tab.active::before { right: 100%; background: radial-gradient(circle at 0 0, transparent 10px, #455760 10px); }
.tab.active::after { left: 100%; background: radial-gradient(circle at 100% 0, transparent 10px, #455760 10px); }
.wheel {
  width: 20px;
  height: 20px;
  border-radius: 3px;
  background: conic-gradient(#ffe14a 0 8%, #ffb74a 8% 18%, #ff7a3c 18% 27%, #f0266f 27% 36%, #b3129a 36% 46%, #7a14d8 46% 54%, #2a55f0 54% 63%, #18a6f0 63% 72%, #3fd04a 72% 82%, #a6e02e 82% 92%, #f4ee3a 92%);
}
.newtab { width: 54px; }
.newtab svg { width: 18px; }
.window { display: flex; height: 37px; margin-left: 54px; }
.window button { width: 57px; }

.toolbar { display: flex; align-items: center; padding: 5px 8px 0; }
.tool { width: 40px; height: 40px; flex: none; }
.tool.faded { color: #8d989e; }
.tool.grey { color: #b4b8ba; }
.avatar svg { width: 28px; height: 28px; }
.omnibox {
  flex: 1;
  display: flex;
  align-items: center;
  height: 43px;
  margin: 0 7px;
  padding: 0 3px 0 12px;
  border-radius: 22px;
  background: #39454b;
}
.lock { color: #b0b5b8; }
.omnibox input { flex: 1; margin-left: 10px; font: 17px/24px "Open Sans", sans-serif; }

.bookmarks { display: flex; align-items: center; height: 44px; padding: 0 18px; white-space: nowrap; }
.marks {
  flex: 1;
  display: grid;
  grid-template-columns: 185px 182px 40px 135px 192px 191px 187px 191px 94px 183px auto;
}
.marks a, .all { display: flex; align-items: center; gap: 9px; }
.light { color: #fff; --land: #455760; }
.more { font-size: 18px; margin-right: 13px; }
.all { border-left: 1px solid #76858c; padding-left: 12px; }

/* Page */
.viewport { flex: 1; display: flex; min-height: 0; color: #000; }
.page {
  flex: 1;
  display: flex;
  flex-direction: column;
  align-items: center;
  overflow: hidden;
  background: linear-gradient(#a6c1ee, #fbc2eb);
}
h1 { margin: 48px 0 49px; font: 700 48px/64px "Open Sans", sans-serif; }
.card {
  flex: none;
  width: 60%;
  height: 750px;
  display: flex;
  align-items: center;
  justify-content: center;
  background: #87bf55;
  box-shadow: 0 24px 48px rgba(0, 0, 0, .3), 0 19px 15px rgba(0, 0, 0, .22);
}
.pick {
  height: 58px;
  padding: 0 12px;
  border: 2px outset #000;
  border-radius: 12px;
  background: #bdcb74;
  font: 25px/30px "Liberation Sans", sans-serif;
}
.scrollbar { width: 21px; flex: none; display: flex; flex-direction: column; align-items: center; background: #f1f1f1; }
.track { flex: 1; display: flex; flex-direction: column; width: 17px; padding-top: 49px; }
.thumb { height: 76%; background: #c1c1c1; }

/* Taskbar */
.taskbar {
  display: flex;
  height: 60px;
  flex: none;
  background: linear-gradient(90deg, #6b4b80, #6a5181 14%, #63436f 24%, #614872 55%, #6c5080);
}
.weather { flex: 1; display: flex; align-items: center; gap: 9px; padding-left: 24px; }
.sky { width: 32px; height: 32px; }
.badged { position: relative; }
.badge {
  position: absolute;
  top: -7px;
  right: -7px;
  width: 20px;
  height: 20px;
  border-radius: 50%;
  font: 15px/20px "Open Sans", sans-serif;
  text-align: center;
  color: #222;
}
.pink { background: #ff99a4; }
.weather .badge { right: -4px; top: -5px; }
.lilac { background: #c3a7dc; }
.live { border: 6px solid #f0555a; background: #fff; }
.lines { display: flex; flex-direction: column; }
.soft { color: #d3cadb; }
.apps { display: flex; align-items: center; }
.app { position: relative; width: 55px; height: 50px; }
.app svg { width: 30px; height: 30px; }
.run::after {
  content: "";
  position: absolute;
  bottom: 1px;
  left: 50%;
  width: 8px;
  height: 4px;
  margin-left: -4px;
  border-radius: 2px;
  background: #b7a9c0;
}
.xbox { width: 51px; margin: 0 2px; border-radius: 6px; background: #452529; }
.xbox::after { background: #ff99a4; }
.current { width: 51px; margin: 0 2px; border-radius: 6px; background: #705781; box-shadow: inset 0 0 0 1px #7b648a; }
.current::after { width: 20px; margin-left: -10px; background: #c3a7dc; }
.search {
  width: 274px;
  height: 40px;
  margin: 0 4px;
  padding: 0 3px 0 15px;
  display: flex;
  align-items: center;
  border-radius: 20px;
  background: #755b83;
}
.search input { flex: 1; margin-left: 12px; font: 16px/24px "Open Sans", sans-serif; }
.search input::placeholder { color: #dcd3e2; opacity: 1; }
.art { width: 66px; height: 40px; }
.tray { display: flex; align-items: center; width: 397px; padding-left: 21px; gap: 10px; }
.lang { flex-direction: column; width: 46px; margin-right: 4px; font-size: 15px; }
.clock { flex-direction: column; align-items: flex-end; width: 82px; white-space: nowrap; }
```
